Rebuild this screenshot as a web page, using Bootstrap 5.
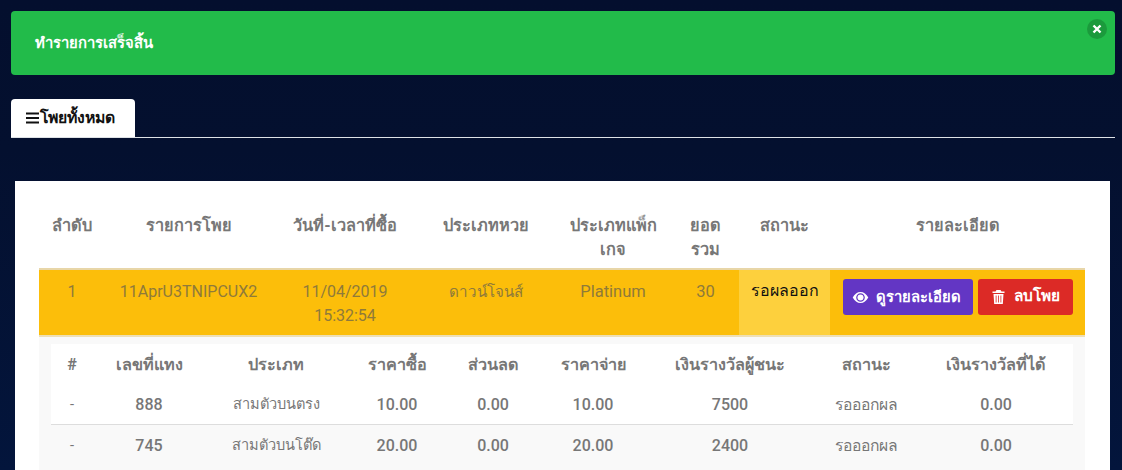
<!DOCTYPE html>
<html lang="th"><head><meta charset="utf-8">
<link rel="stylesheet" href="https://cdn.jsdelivr.net/npm/bootstrap@5.3.0/dist/css/bootstrap.min.css">
<style>
html,body{height:470px;overflow:hidden}
body{background:linear-gradient(180deg,#040f2e 0,#04102f 150px,#03153c 470px);font-family:Roboto,"Noto Sans",sans-serif;font-size:16px;color:#777}
.page-wrap{padding:11px 7px 0 11px}
.ok-alert{height:64px;background:#22bb4a;color:#fff;border-radius:4px;padding:0 24px;font-weight:700;font-size:14.8px;border:0;margin:0 0 24px}
.ok-close{position:absolute;top:8px;right:8px;width:20px;height:20px;background:#1b9a3c;border:0;border-radius:50%;padding:0}
.tab-line{border-bottom:1px solid #dee2e6;height:39px;margin-bottom:43px}
.tab-on{width:124px;height:38px;background:#fff;color:#111;font-weight:700;font-size:15.8px;border-radius:4px 4px 0 0;padding-left:15px;gap:1px}
.panel{background:#fff;margin:0 5px 0 4px;padding:24px 24px 0;height:300px}
table.main-t{table-layout:fixed;width:1046px;margin:0;border-collapse:collapse;color:#777}
table.main-t>thead>tr>th{height:64px;padding:9px 8px 0;font-size:16.3px;font-weight:700;line-height:24px;vertical-align:top;text-align:center;color:#777;border:0;background:transparent}
table.main-t>tbody>tr.hit>td{height:67px;background:#fcbe0a;padding:10px 8px 0;font-size:16px;line-height:24px;text-align:center;vertical-align:top;color:#8f7a3a;border-top:2px solid #e8d6a8;border-bottom:2px solid #eedfb5}
table.main-t>tbody>tr.hit>td.thai-cell{font-size:15.2px}
table.main-t>tbody>tr.hit>td.mid-cell{font-size:16.5px}
table.main-t>tbody>tr.hit>td.stat{background:#fdd03d;color:#111;font-size:16px;font-weight:400;padding:9px 0 0}
table.main-t>tbody>tr.hit>td.acts{padding:9px 12px 0 0;text-align:right}
.w1{width:66px}.w2{width:167px}.w3{width:146px}.w4{width:136px}.w5{width:118px}.w6{width:67px}.w7{width:91px}.w8{width:255px}
.act{height:36px;font-size:14.8px;font-weight:700;color:#fff;border:0;border-radius:3px;padding:0;gap:7px;white-space:nowrap}
.act:hover{color:#fff}
.act-v{background:#6336c4;width:130px;padding-right:4px}.act-v:hover{background:#6336c4}
.act-d{background:#dc2a26;width:95px;margin-left:5px;gap:9px;font-size:15.4px}.act-d:hover{background:#dc2a26}
.sub-wrap{background:#f9f9f9;padding:7px 12px 0;height:135px}
table.sub-t{table-layout:fixed;width:1022px;margin:0;border-collapse:collapse}
table.sub-t th,table.sub-t td{text-align:center;border:0;padding:0;vertical-align:middle;color:#777}
table.sub-t thead th{height:39px;padding-top:4px;background:#fff;font-weight:700;font-size:16.2px}
table.sub-t tbody td{height:41px;padding-top:4px;font-size:16px;font-weight:500;background:#fff}
table.sub-t tbody tr.alt td{padding-top:2px;background:#f9f9f9;border-top:1px solid #ddd}
table.sub-t td.lite{font-weight:400;font-size:14.6px}
table.sub-t td.lite-w{font-weight:400;font-size:15.7px}
.c1{width:42px}.c2{width:112px}.c3{width:142px}.c4{width:100px}.c5{width:92px}.c6{width:108px}.c7{width:166px}.c8{width:106px}.c9{width:154px}
</style></head><body>
<div class="page-wrap">
<div class="alert ok-alert d-flex align-items-center position-relative" role="alert">ทำรายการเสร็จสิ้น
<button type="button" class="ok-close d-flex align-items-center justify-content-center" aria-label="ปิด"><svg width="10" height="10" viewBox="0 0 10 10"><path d="M1.5 1.5l7 7M8.5 1.5l-7 7" stroke="#fff" stroke-width="2.4"/></svg></button></div>
<div class="tab-line"><div class="tab-on d-inline-flex align-items-center"><svg width="13" height="12" viewBox="0 0 13 12"><path d="M0 1.500h13M0 6h13M0 10.500h13" stroke="#111" stroke-width="2"/></svg><span>โพยทั้งหมด</span></div></div>
<div class="panel">
<table class="table main-t">
<colgroup><col class="w1"><col class="w2"><col class="w3"><col class="w4"><col class="w5"><col class="w6"><col class="w7"><col class="w8"></colgroup>
<thead><tr><th>ลำดับ</th><th>รายการโพย</th><th>วันที่-เวลาที่ซื้อ</th><th>ประเภทหวย</th><th>ประเภทแพ็กเกจ</th><th>ยอดรวม</th><th>สถานะ</th><th>รายละเอียด</th></tr></thead>
<tbody>
<tr class="hit"><td>1</td><td>11AprU3TNIPCUX2</td><td>11/04/2019 15:32:54</td><td class="thai-cell">ดาวน์โจนส์</td><td class="mid-cell">Platinum</td><td class="mid-cell">30</td><td class="stat">รอผลออก</td>
<td class="acts"><button class="btn act act-v d-inline-flex align-items-center justify-content-center"><svg width="17" height="11" viewBox="0 0 17 12"><path fill="#fff" fill-rule="evenodd" d="M8.500 0C5 0 2 2.200 0 6c2 3.800 5 6 8.500 6S15 9.800 17 6C15 2.200 12 0 8.500 0zm0 1.300a4.700 4.700 0 1 1 0 9.400 4.700 4.700 0 0 1 0-9.400z"/><circle cx="8.500" cy="6" r="3.300" fill="#fff"/></svg>ดูรายละเอียด</button><button class="btn act act-d d-inline-flex align-items-center justify-content-center"><svg width="13" height="14" viewBox="0 0 12 14"><path fill="#fff" d="M4 0h4l1 1.500h3V3H0V1.500h3zM1 4h10l-.7 10H1.700zm2.200 1.500V12.500h.8V5.500zm2.400 0V12.500h.8V5.500zm2.400 0V12.500h.8V5.500z"/></svg>ลบโพย</button></td></tr>
<tr><td colspan="8" class="p-0 border-0"><div class="sub-wrap">
<table class="table sub-t">
<colgroup><col class="c1"><col class="c2"><col class="c3"><col class="c4"><col class="c5"><col class="c6"><col class="c7"><col class="c8"><col class="c9"></colgroup>
<thead><tr><th>#</th><th>เลขที่แทง</th><th>ประเภท</th><th>ราคาซื้อ</th><th>ส่วนลด</th><th>ราคาจ่าย</th><th>เงินรางวัลผู้ชนะ</th><th>สถานะ</th><th>เงินรางวัลที่ได้</th></tr></thead>
<tbody>
<tr><td class="lite">-</td><td>888</td><td class="lite">สามตัวบนตรง</td><td>10.00</td><td>0.00</td><td>10.00</td><td>7500</td><td class="lite-w">รอออกผล</td><td>0.00</td></tr>
<tr class="alt"><td class="lite">-</td><td>745</td><td class="lite">สามตัวบนโต๊ด</td><td>20.00</td><td>0.00</td><td>20.00</td><td>2400</td><td class="lite-w">รอออกผล</td><td>0.00</td></tr>
</tbody></table>
</div></td></tr>
</tbody></table>
</div>
</div>
<script src="https://cdn.jsdelivr.net/npm/bootstrap@5.3.0/dist/js/bootstrap.bundle.min.js"></script>
</body></html>
